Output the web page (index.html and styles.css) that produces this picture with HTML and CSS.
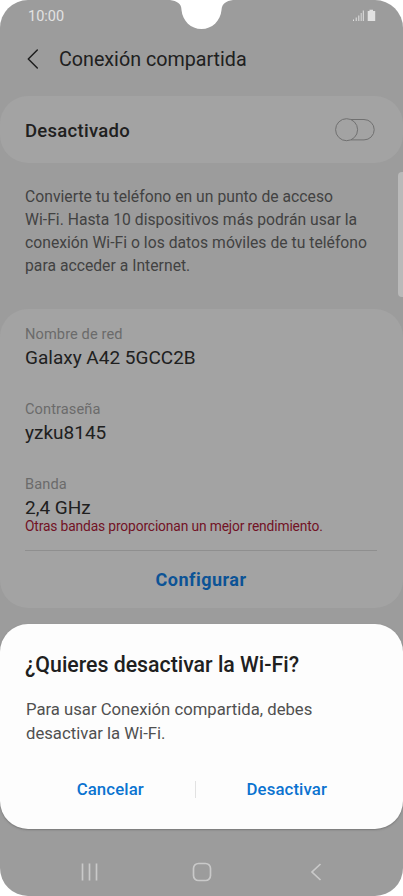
FILE: index.html
```html
<!DOCTYPE html>
<html lang="es">
<head>
<meta charset="utf-8">
<title>Conexión compartida</title>
<link rel="stylesheet" href="styles.css">
</head>
<body>
<div class="screen">
  <svg class="notch" width="64" height="30" viewBox="0 0 64 30"><path d="M0 0C7 1 11.500 3.500 11.500 10C12.500 21 21 29 31.500 29C42 29 50.500 21 51.500 10C52 3.500 56 1 63 0Z" fill="#fff"/></svg>
  <header class="status">
    <span class="time">10:00</span>
    <svg width="26" height="14" viewBox="0 0 26 14" fill="#e2e2e2"><path d="M1 10.500h1v1.500H1zM3.700 8.500h1v3.500h-1zM6.300 6.500h1v5.500h-1zM8.700 4h.9v8h-.9zM10.800 1.500h1v10.500h-1zM15.700 2h1.800V.8h3.500V2h2.200v10h-7.500z"/></svg>
  </header>
  <div class="title-bar">
    <svg width="12" height="20" viewBox="0 0 12 20" fill="none" stroke="#202020" stroke-width="1.500" stroke-linecap="round" stroke-linejoin="round"><path d="M10.300 1L1.300 10L10.300 19"/></svg>
    <h1 class="title">Conexión compartida</h1>
  </div>
  <section class="card toggle-card">
    <span class="toggle-label">Desactivado</span>
    <svg width="40" height="24" viewBox="0 0 40 24" fill="none" stroke="#707070"><path d="M16 1.500H29A10.200 10.200 0 0 1 29 21.900H16"/><circle cx="11.600" cy="11.700" r="11"/></svg>
  </section>
  <p class="intro">Convierte tu teléfono en un punto de acceso<br>Wi-Fi. Hasta 10 dispositivos más podrán usar la<br>conexión Wi-Fi o los datos móviles de tu teléfono<br>para acceder a Internet.</p>
  <section class="card network">
    <dl class="fields">
      <div class="field"><dt>Nombre de red</dt><dd class="name">Galaxy A42 5GCC2B</dd></div>
      <div class="field"><dt>Contraseña</dt><dd class="password">yzku8145</dd></div>
      <div class="field"><dt>Banda</dt><dd class="band">2,4 GHz</dd><dd class="hint">Otras bandas proporcionan un mejor rendimiento.</dd></div>
    </dl>
    <div class="configure"><span>Configurar</span></div>
  </section>
  <section class="dialog">
    <h2 class="question">¿Quieres desactivar la Wi-Fi?</h2>
    <p class="message">Para usar Conexión compartida, debes<br>desactivar la Wi-Fi.</p>
    <div class="actions"><span class="action cancel">Cancelar</span><i class="divider"></i><span class="action confirm">Desactivar</span></div>
  </section>
  <nav class="nav">
    <svg width="18" height="18" viewBox="0 0 18 18" fill="none" stroke="#c9c9c9" stroke-width="1.700"><path d="M1.500 .5v17M8.500 .5v17M15.500 .5v17"/></svg>
    <svg width="20" height="20" viewBox="0 0 20 20" fill="none" stroke="#c9c9c9" stroke-width="1.700"><rect x="1.500" y="1.500" width="17" height="17" rx="5"/></svg>
    <svg width="12" height="18" viewBox="0 0 12 18" fill="none" stroke="#c9c9c9" stroke-width="1.700"><path d="M10.500 1L2 9L10.500 17"/></svg>
  </nav>
  <i class="edge-handle"></i>
</div>
</body>
</html>
```
FILE: styles.css
```css
* { box-sizing: border-box; margin: 0; padding: 0; }
body { background: #fff; font-family: Roboto, sans-serif; color: #202020; }
.screen { position: relative; width: 403px; height: 896px; overflow: hidden; border-radius: 28px; background: #9c9c9c; white-space: nowrap; display: flex; flex-direction: column; }
svg { display: block; flex: none; }
.notch { position: absolute; left: 170px; top: 0; }
.status { height: 32px; padding: 0 25px 0 28px; display: flex; align-items: center; justify-content: space-between; }
.time { padding-top: 1px; font-size: 14.5px; line-height: 32px; color: #e2e2e2; }
.title-bar { height: 64px; padding: 0 0 10px 27px; display: flex; align-items: center; gap: 20px; }
.title { padding-top: 2px; font-size: 19.7px; font-weight: 400; line-height: 28px; }
.card { background: #a3a3a3; border-radius: 28px; }
.toggle-card { height: 67px; padding: 0 28px 0 25px; display: flex; align-items: center; justify-content: space-between; }
.toggle-label { padding-top: 2px; font-size: 18.5px; letter-spacing: .28px; font-weight: 500; }
.intro { margin-top: 22px; padding-left: 25px; height: 124px; font-size: 15.7px; letter-spacing: .02px; line-height: 23px; color: #424242; }
.network { height: 299px; padding: 15px 26px 0 25px; }
.fields { height: 227px; border-bottom: 1px solid #8f8f8f; }
.field { height: 75px; }
.field dt { font-size: 14.6px; letter-spacing: .1px; line-height: 21px; color: #6b6b6b; }
.field dd { font-size: 19px; letter-spacing: 0; line-height: 26px; }
.field .hint { margin-top: -5px; font-size: 13.8px; letter-spacing: -.14px; line-height: 20px; color: #721225; }
.configure { height: 56px; display: flex; align-items: center; justify-content: center; font-size: 18px; letter-spacing: .5px; font-weight: 700; color: #0c5396; }
.dialog { margin-top: 16px; height: 205px; padding: 27px 25px 0; border-radius: 28px; background: #fdfdfd; box-shadow: 0 1px 2px #777; }
.question { font-size: 21.3px; line-height: 28px; font-weight: 500; }
.message { margin-top: 19px; padding-left: 1px; font-size: 16.7px; letter-spacing: 0; line-height: 24px; color: #505050; }
.actions { margin-top: 30px; padding-left: 1px; height: 26px; display: flex; align-items: center; font-size: 16.8px; letter-spacing: .1px; font-weight: 500; color: #0b73d0; }
.action { text-align: center; }
.cancel { width: 169px; }
.confirm { width: 183px; }
.divider { width: 1px; height: 17px; background: #e2e2e2; }
.nav { flex: 1; padding: 19px 81px 0; display: grid; grid-template-columns: 30px 1fr 30px; align-items: center; }
.nav svg:nth-child(2) { justify-self: center; }
.nav svg:nth-child(3) { justify-self: end; }
.edge-handle { position: absolute; left: 398px; top: 172px; width: 9px; height: 125px; border-radius: 4px; background: #b9b9b9; }
```
